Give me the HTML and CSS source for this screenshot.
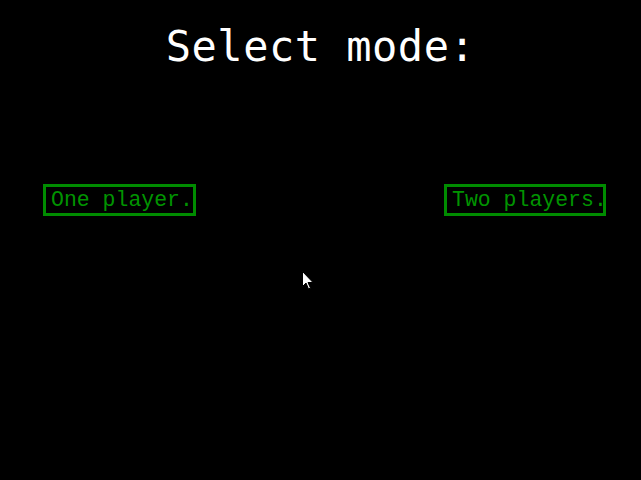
FILE: index.html
```html
<!DOCTYPE html>
<html>
<head>
<meta charset="utf-8">
<link rel="stylesheet" href="styles.css">
</head>
<body>
<div class="screen">
  <h1 class="title">Select mode:</h1>
  <div class="modes">
    <div class="btn btn-one">One player.</div>
    <div class="btn btn-two">Two players.</div>
  </div>
  <svg class="cursor" width="12" height="19" viewBox="0 0 12 19">
    <path d="M0.5 0.5 L0.5 15.5 L4 12 L6.5 18 L8.5 17 L6 11.5 L11 11.5 Z" fill="#fff" stroke="#000" stroke-width="1"/>
  </svg>
</div>
</body>
</html>
```
FILE: styles.css
```css
html, body {
  margin: 0;
  padding: 0;
  background: #000;
}
.screen {
  position: relative;
  width: 641px;
  height: 480px;
  background: #000;
  overflow: hidden;
}
.title {
  margin: 0;
  padding-top: 26px;
  text-align: center;
  font-family: "DejaVu Sans Mono", monospace;
  font-weight: normal;
  font-size: 42px;
  line-height: 42px;
  color: #fff;
  letter-spacing: 0.5px;
}
.modes {
  display: flex;
  justify-content: space-between;
  margin-top: 116px;
  padding: 0 35px 0 43px;
}
.btn {
  box-sizing: border-box;
  border: 3px solid #008c00;
  padding: 0 0 0 5px;
  height: 32px;
  line-height: 26px;
  font-family: "Liberation Mono", monospace;
  font-size: 21.5px;
  color: #009400;
  white-space: nowrap;
}
.btn-one {
  width: 153px;
}
.btn-two {
  width: 162px;
}
.cursor {
  position: absolute;
  left: 302px;
  top: 271px;
}
```
